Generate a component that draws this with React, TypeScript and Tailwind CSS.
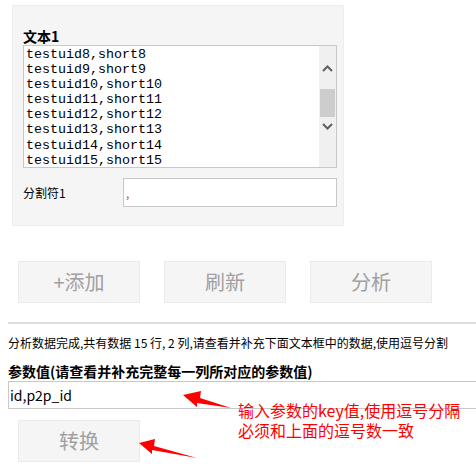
import React from "react";

const lines = [
  "testuid8,short8",
  "testuid9,short9",
  "testuid10,short10",
  "testuid11,short11",
  "testuid12,short12",
  "testuid13,short13",
  "testuid14,short14",
  "testuid15,short15",
];

const cjk = { fontFamily: '"Noto Sans CJK SC", "Noto Sans", sans-serif' };

function Btn({ label }: { label: string }) {
  return (
    <div
      className="w-[122px] h-[42px] flex items-center justify-center bg-[#f5f5f5] border border-[#ebebeb] text-[20px] text-[#a0a0a0]"
      style={cjk}
    >
      {label}
    </div>
  );
}

export default function App() {
  return (
    <div className="relative w-[476px] h-[473px] overflow-hidden bg-white px-2" style={cjk}>
      {/* Panel */}
      <div className="ml-1 mt-[5px] w-[332px] h-[221px] bg-[#f5f5f5] border border-[#eeeeee] pl-[10px] pr-[6px] pt-[22px]">
        <div className="text-[14px] font-bold leading-[17px] text-black">文本1</div>
        <div className="flex w-[314px] h-[123px] bg-white border border-[#c8c8c8]">
          <div className="flex-1 pl-[2px] pt-[1px] font-['Liberation_Mono',monospace] text-[13.33px] leading-[15.1px] text-black overflow-hidden">
            {lines.map((l) => (
              <div key={l} className="whitespace-pre">{l}</div>
            ))}
          </div>
          <div className="w-[17px] h-full bg-[#f0f0f0] flex flex-col items-center">
            <svg width="17" height="17" viewBox="0 0 17 17" className="mt-[14px]">
              <path d="M4 11 L8.5 6.5 L13 11" fill="none" stroke="#606060" strokeWidth="2" />
            </svg>
            <div className="w-[15px] h-[28px] bg-[#cdcdcd] mt-[12px]" />
            <svg width="17" height="17" viewBox="0 0 17 17" className="mt-[1px]">
              <path d="M4 6 L8.5 10.5 L13 6" fill="none" stroke="#606060" strokeWidth="2" />
            </svg>
          </div>
        </div>
        <div className="flex items-center mt-[10px]">
          <div className="w-[100px] text-[12px] text-black">分割符1</div>
          <div className="w-[214px] h-[29px] bg-white border border-[#c8c8c8] flex items-center pl-[2px] text-[12px] text-[#d04020]">
            ,
          </div>
        </div>
      </div>

      {/* Buttons */}
      <div className="flex gap-[24px] ml-[10px] mt-[35px]">
        <Btn label="+添加" />
        <Btn label="刷新" />
        <Btn label="分析" />
      </div>

      {/* Divider */}
      <div className="mt-[19px] h-[2px] w-[480px] bg-[#dddddd]" />

      <div className="mt-[11px] text-[12px] leading-[16px] text-black whitespace-nowrap">
        分析数据完成,共有数据 15 行, 2 列,请查看并补充下面文本框中的数据,使用逗号分割
      </div>

      <div className="mt-[12px] text-[14px] leading-[17px] font-bold text-black whitespace-nowrap">
        参数值(请查看并补充完整每一列所对应的参数值)
      </div>

      <div className="mt-[1px] w-[480px] h-[28px] border border-[#c8c8c8] bg-white flex items-center pl-[1px] text-[14px] text-black">
        id,p2p_id
      </div>

      <div className="ml-[10px] mt-[11px]">
        <Btn label="转换" />
      </div>

      {/* Annotations */}
      <div className="absolute left-[238px] top-[400px] text-[16px] leading-[20px] text-[#ff0000] whitespace-nowrap">
        <div>输入参数的key值,使用逗号分隔</div>
        <div>必须和上面的逗号数一致</div>
      </div>
      <svg className="absolute left-0 top-0" width="476" height="473" viewBox="0 0 476 473">
        <polygon points="183,395 201,391 200,398 231,408 197,403 197,407" fill="#ff0000" />
        <polygon points="139,443 155,439 154,446 197,458 152,450 152,454" fill="#ff0000" />
      </svg>
    </div>
  );
}
